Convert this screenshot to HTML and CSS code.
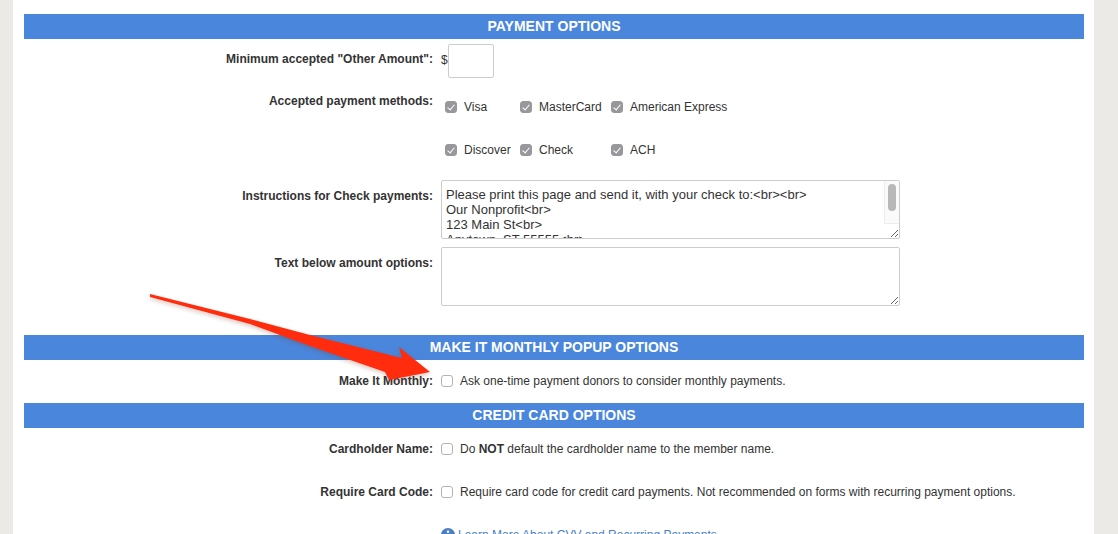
FILE: index.html
```html
<!DOCTYPE html>
<html lang="en">
<head>
<title>Payment options</title>
<link rel="stylesheet" href="styles.css">
</head>
<body>
<div class="panel">
    <h2 class="bar">Payment Options</h2>
    <div class="row row-amount">
        <label class="name">Minimum accepted "Other Amount":</label>
        <div class="amount">$<input type="text" class="amount-box"></div>
    </div>
    <div class="row row-methods">
        <label class="name">Accepted payment methods:</label>
        <div class="methods">
            <label class="opt"><input type="checkbox" class="check" checked disabled>Visa</label>
            <label class="opt"><input type="checkbox" class="check" checked disabled>MasterCard</label>
            <label class="opt"><input type="checkbox" class="check" checked disabled>American Express</label>
            <label class="opt"><input type="checkbox" class="check" checked disabled>Discover</label>
            <label class="opt"><input type="checkbox" class="check" checked disabled>Check</label>
            <label class="opt"><input type="checkbox" class="check" checked disabled>ACH</label>
        </div>
    </div>
    <div class="row">
        <label class="name">Instructions for Check payments:</label>
        <div class="area-wrap">
            <textarea class="area area-scroll" readonly>Please print this page and send it, with your check to:&lt;br&gt;&lt;br&gt;
Our Nonprofit&lt;br&gt;
123 Main St&lt;br&gt;
Anytown, ST 55555&lt;br&gt;</textarea>
            <div class="scroll-track"><div class="scroll-thumb"></div></div>
        </div>
    </div>
    <div class="row row-below-text">
        <label class="name">Text below amount options:</label>
        <textarea class="area"></textarea>
    </div>

    <h2 class="bar bar-monthly">Make It Monthly Popup Options</h2>
    <div class="row row-monthly">
        <label class="name">Make It Monthly:</label>
        <label class="opt"><input type="checkbox" class="check">Ask one-time payment donors to consider monthly payments.</label>
    </div>

    <h2 class="bar bar-card">Credit Card Options</h2>
    <div class="row row-holder">
        <label class="name">Cardholder Name:</label>
        <label class="opt"><input type="checkbox" class="check"><span>Do <b>NOT</b> default the cardholder name to the member name.</span></label>
    </div>
    <div class="row row-code">
        <label class="name">Require Card Code:</label>
        <label class="opt"><input type="checkbox" class="check">Require card code for credit card payments. Not recommended on forms with recurring payment options.</label>
    </div>
    <div class="row row-learn">
        <span></span>
        <a class="learn" href="#">
            <svg class="info" viewBox="0 0 14 14" width="14" height="14">
                <circle cx="7" cy="7" r="7" fill="#4a7fc4"/>
                <rect x="5.9" y="2.6" width="2.2" height="2.2" fill="#fff"/>
                <path d="M5.3 6h2.8v4.2h0.8v1.2H5.2v-1.2h0.9V7.2H5.3z" fill="#fff"/>
            </svg>Learn More About CVV and Recurring Payments</a>
    </div>
</div>

<!-- annotation arrow drawn on top of the screenshot -->
<svg class="arrow" width="1118" height="534" viewBox="0 0 1118 534">
    <polygon points="150,294 250,319 310,335 370,350 402,358 399,347 430,372 389,380 385,372 310,346 250,324 150,297" fill="#ff2d0d"/>
</svg>
</body>
</html>
```

FILE: styles.css
```css
html, body { height: 534px; overflow: hidden; }
body { margin: 0; background-color: #ebeae6; color: #333; font-family: "Liberation Sans", Arial, sans-serif; font-size: 12px; }

.panel { margin-left: 13px; width: 1060px; height: 520px; padding: 14px 10px 0 11px; background-color: #fff; }

.bar { margin: 0; height: 25px; line-height: 24px; background-color: #4a86db; color: #fff; font-size: 14px; font-weight: bold; text-align: center; text-transform: uppercase; }
.bar-monthly { margin-top: 29px; }
.bar-card { margin-top: 15px; }

.row { display: grid; grid-template-columns: 409px 1fr; column-gap: 8px; }
.name { font-weight: bold; text-align: right; }
.opt { display: flex; align-items: center; white-space: nowrap; }

.row-amount { margin-top: 5px; }
.row-amount .name { padding-top: 8px; }
.amount { display: flex; align-items: flex-start; line-height: 32px; }
.amount-box { box-sizing: border-box; width: 46px; height: 34px; margin: 0; border: 1px solid #ccc; border-radius: 2px; }

.row-methods { margin-top: 16px; }
.methods { display: grid; grid-template-columns: 75px 91px auto; grid-template-rows: 43px 37px; justify-content: start; margin-top: 6px; padding-left: 4px; }
.methods .opt { align-self: start; height: 14px; }

.check { appearance: none; -webkit-appearance: none; box-sizing: border-box; position: relative; flex: none; width: 12px; height: 12px; margin: 0 7px 0 0; border: 1px solid #b3b3b3; border-radius: 3px; background-color: #fff; }
.check:checked { background-color: #98989c; border-color: #98989c; }
.check:checked::after { content: ""; position: absolute; left: 3px; top: 1px; width: 3px; height: 6px; border: solid #fff; border-width: 0 1.5px 1.5px 0; transform: rotate(40deg); }

.row-below-text { margin-top: 8px; }
.row:has(.area) .name { padding-top: 9px; }

.area-wrap { position: relative; width: 459px; height: 59px; }
.area { display: block; box-sizing: border-box; width: 459px; height: 59px; margin: 0; padding: 6px 4px; border: 1px solid #ccc; border-radius: 2px; color: #333; font-family: "Liberation Sans", Arial, sans-serif; font-size: 13px; line-height: 15px; overflow: hidden; outline: none; }

/* the reference shows a scrollbar here, headless chrome hides the real one */
.scroll-track { position: absolute; top: 1px; right: 1px; width: 14px; height: 42px; background-color: #fafafa; border-left: 1px solid #ececec; border-bottom: 1px solid #ececec; }
.scroll-thumb { width: 8px; height: 27px; margin: 3px 0 0 3px; background-color: #b8b8b8; border-radius: 4px; }

.row-monthly { margin-top: 14px; }
.row-holder { margin-top: 14px; }
.row-code { margin-top: 29px; }
.row-learn { margin-top: 29px; }

.learn { display: flex; align-items: center; color: #4a7fc4; text-decoration: none; white-space: nowrap; }
.info { margin-right: 3px; }

.arrow { position: absolute; left: 0; top: 0; pointer-events: none; filter: drop-shadow(0 2px 2px rgba(120, 60, 40, 0.3)); }
```
